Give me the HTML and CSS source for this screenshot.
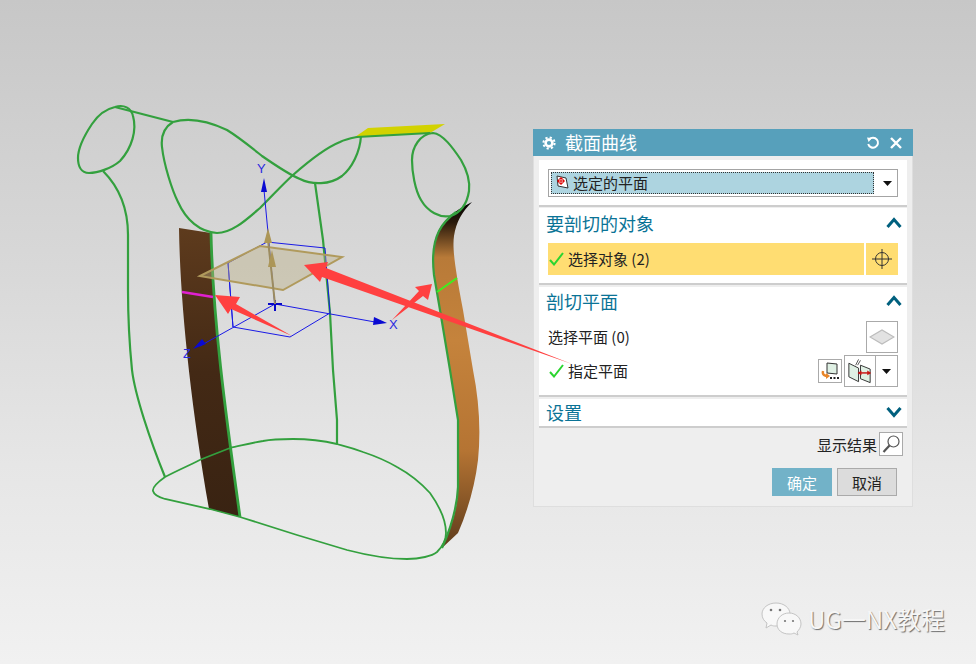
FILE: index.html
```html
<!DOCTYPE html>
<html lang="zh-CN">
<head>
  <meta charset="UTF-8">
  <title>截面曲线</title>
  <link rel="stylesheet" href="styles.css">
</head>
<body>
  <div class="viewport">
    <!-- 3D model -->
    <svg class="layer" viewBox="0 0 976 664" xmlns="http://www.w3.org/2000/svg">
      <defs>
        <linearGradient id="brown" x1="0" y1="0" x2="0" y2="1">
          <stop offset="0" stop-color="#5e3b1d"/>
          <stop offset="0.5" stop-color="#432915"/>
          <stop offset="1" stop-color="#392312"/>
        </linearGradient>
        <linearGradient id="orange" x1="0" y1="0" x2="0" y2="1">
          <stop offset="0" stop-color="#000"/>
          <stop offset="0.06" stop-color="#2a1a0c"/>
          <stop offset="0.16" stop-color="#b87a38"/>
          <stop offset="0.4" stop-color="#c5833c"/>
          <stop offset="0.72" stop-color="#b57433"/>
          <stop offset="1" stop-color="#5f3c1c"/>
        </linearGradient>
      </defs>

      <path class="strip" fill="url(#brown)" d="M179,228 L211,233 C213,320 225,410 240,517 L209,509 C190,400 180,300 179,228 Z"/>
      <path class="strip" fill="url(#orange)" d="M472,202 C462,212 456,222 454,236 C452,250 456,272 463,310 L473,370 C479,400 481,430 478,460 C475,485 468,510 458,533 L442,548 C450,530 458,510 458,487 L458,420 L450,370 L437,293 C433,270 431,250 436,237 C441,222 452,212 472,202 Z"/>
      <path fill="#d2d200" d="M355,137 L368,128 L445,124 L430,133 Z"/>

      <g class="curve">
        <path d="M115,107 C124,104 131,108 133,116 C137,130 132,148 120,161 C112,168 98,173 89,173 C81,173 78,166 78,158 C78,148 84,136 92,124 C98,115 106,109 115,107 Z"/>
        <path d="M115,107 L173,122"/>
        <path d="M103,171 C118,186 128,205 128,235 L128,290 C128,320 130,350 132,370 C135,395 150,440 165,477"/>
        <path d="M173,122 C163,128 161,138 162,147 C164,165 172,190 178,202 C186,220 200,232 217,233 C232,233 246,220 260,208 C272,196 284,183 293,175 C310,160 325,148 340,142 C346,139 352,138 357,137 L430,133"/>
        <path d="M173,122 C190,117 208,121 227,130 C240,138 252,148 262,156 C275,165 290,175 300,179 C312,185 330,185 342,176 C352,168 360,152 361,136"/>
        <path d="M433,133 C443,134 453,148 461,160 C468,172 470,182 469,191 C467,204 460,213 450,216 C440,218 428,212 421,200 C415,190 412,172 412,160 C412,147 420,134 433,133 Z"/>
        <path d="M456,212 C448,218 442,225 439,231 C433,243 432,258 434,275 L440,310 L450,370 L458,420 L458,487 C457,510 450,530 442,548"/>
        <path class="edge" d="M211,233 C213,320 225,410 240,517"/>
        <path d="M315,183 L323,240 L330,313 L333,370 L337,420 L337,444"/>
        <g class="thin">
          <path d="M165,477 C158,482 152,487 153,491 C154,495 158,497 165,499 L210,509 L240,517 L297,535 L347,550 C370,556 390,559 407,559 C420,559 432,556 437,552 C442,547 446,540 446,533 C446,520 440,507 430,493 C420,482 408,473 397,467 C385,460 372,455 363,452 C350,447 340,445 337,444 C320,440 305,439 293,439 C280,439 268,440 263,441 C250,443 240,446 230,448 L202,459 C190,465 176,471 165,477 Z"/>
        </g>
      </g>

      <path class="pink" d="M182,292 L213,297"/>
      <path class="lime" d="M437,292 L457,278"/>

      <!-- csys -->
      <g class="axes">
        <path d="M275,307 L264,190"/>
        <path d="M275,304 L375,322"/>
        <path d="M275,304 L200,346"/>
        <path d="M228,263 L267,242 L325,248 L330,313 L290,337 L233,327 Z"/>
        <path d="M228,263 L233,327"/>
        <path class="marker" d="M268,304 L282,304 M275,300 L275,311"/>
      </g>
      <path class="cone" d="M264,178 L267,192 L261,192 Z"/>
      <path class="cone" d="M387,323 L373,325 L374,317 Z"/>
      <path class="cone" d="M193,349 L202,339 L206,344 Z"/>
      <text class="axis-label" x="257" y="173">Y</text>
      <text class="axis-label" x="389" y="329">X</text>
      <text class="axis-label" x="183" y="358">Z</text>

      <path class="plane" d="M200,276 L260,246 L342,257 L283,290 Z"/>
      <path class="normal" d="M275,304 L268,240"/>
      <path class="normal-head" d="M268,228 L272,243 L264,243 Z"/>
      <path class="normal-head" d="M272,250 L276,267 L268,267 Z"/>
    </svg>

    <div class="dialog">
      <div class="titlebar">
        <svg class="gear" viewBox="0 0 14 14"><circle cx="7" cy="7" r="3.4"/><circle class="teeth" cx="7" cy="7" r="5.6"/></svg>
        <span class="title">截面曲线</span>
        <svg class="tb-btn" viewBox="0 0 14 14"><path d="M3.2,3.4 A5,5 0 1 1 2.2,8"/><path class="tip" d="M1,1.4 L6,2 L2.6,6 Z"/></svg>
        <svg class="tb-btn tb-close" viewBox="0 0 14 14"><path d="M2,2 L12,12 M12,2 L2,12"/></svg>
      </div>

      <div class="dialog-body">
        <section class="group group-top">
          <div class="combo">
            <div class="combo-value">
              <svg class="combo-icon" viewBox="0 0 13 14"><path d="M1,1 L10,3 L12,13 L2,11 Z" fill="#fff" stroke="#333"/><circle cx="5" cy="6" r="2.6" fill="none" stroke="#d00"/><path d="M5,2 L5,10 M1,6 L9,6" stroke="#d00"/></svg>
              <span>选定的平面</span>
            </div>
            <svg class="caret" viewBox="0 0 9 5"><path d="M0,0 L9,0 L4.5,5 Z"/></svg>
          </div>
        </section>

        <section class="group">
          <div class="group-head"><span>要剖切的对象</span>
            <svg class="chevron" viewBox="0 0 16 12"><path d="M1.5,10 L8,2.5 L14.5,10"/></svg>
          </div>
          <div class="pick-row">
            <div class="pick-label">
              <svg class="check" viewBox="0 0 15 14"><path d="M1,8 L5,12.5 L14,1"/></svg>
              <span>选择对象 (2)</span>
            </div>
            <div class="pick-btn">
              <svg viewBox="0 0 22 22"><circle cx="11" cy="11" r="6.5"/><path d="M11,1 L11,21 M1,11 L21,11"/></svg>
            </div>
          </div>
        </section>

        <section class="group group-plane">
          <div class="group-head"><span>剖切平面</span>
            <svg class="chevron" viewBox="0 0 16 12"><path d="M1.5,10 L8,2.5 L14.5,10"/></svg>
          </div>
          <div class="opt-row">
            <span class="opt-text">选择平面 (0)</span>
            <div class="icon-btn icon-btn-lg">
              <svg viewBox="0 0 26 18" width="26" height="18"><path d="M1,9 L13,2 L25,9 L13,16 Z" fill="#e2e2e2" stroke="#bcbcbc" stroke-width="1.2"/></svg>
            </div>
          </div>
          <div class="opt-row opt-row-last">
            <svg class="check" viewBox="0 0 15 14"><path d="M1,8 L5,12.5 L14,1"/></svg>
            <span class="opt-text">指定平面</span>
            <div class="tools">
              <div class="icon-btn icon-btn-sm">
                <svg viewBox="0 0 20 20" width="20" height="20">
                  <path d="M7,2 L17,3 L17,13 L7,12 Z" fill="#dff0e4" stroke="#333"/>
                  <path d="M3,10 C2,14 5,15 8,15" fill="none" stroke="#e8862a" stroke-width="2.4"/>
                  <path d="M6,12 L10,15 L6,18 Z" fill="#e8862a"/>
                  <path d="M10,17 L12,17 M13.5,17 L15.5,17 M17,17 L19,17" stroke="#222" stroke-width="2"/>
                </svg>
              </div>
              <div class="split-btn">
                <div class="split-main">
                  <svg viewBox="0 0 31 30" width="31" height="30">
                    <path d="M4,7 L14,12 L14,26 L4,21 Z" fill="#dff0e4" stroke="#333"/>
                    <path d="M16,9 L26,13 L26,27 L16,23 Z" fill="#dff0e4" stroke="#333"/>
                    <path d="M11,9 L14,3 M13,9 L16,4" stroke="#555"/>
                    <path d="M14,17 L26,17" stroke="#c81414" stroke-width="1.5"/>
                    <path d="M17,14.5 L13,17 L17,19.5 Z M23,14.5 L27,17 L23,19.5 Z" fill="#c81414"/>
                  </svg>
                </div>
                <div class="split-arrow"><svg class="caret" viewBox="0 0 9 5"><path d="M0,0 L9,0 L4.5,5 Z"/></svg></div>
              </div>
            </div>
          </div>
        </section>

        <section class="group group-closed">
          <div class="group-head"><span>设置</span>
            <svg class="chevron" viewBox="0 0 16 12"><path d="M1.5,2 L8,9.5 L14.5,2"/></svg>
          </div>
        </section>
      </div>

      <div class="preview">
        <span>显示结果</span>
        <div class="icon-btn icon-btn-sm">
          <svg viewBox="0 0 20 20" width="20" height="20"><circle cx="12.5" cy="7.5" r="5.5" fill="#fff" stroke="#555" stroke-width="1.2"/><path d="M8.5,11.5 L2.5,18" stroke="#555" stroke-width="2.2"/></svg>
        </div>
      </div>
      <div class="actions">
        <button class="btn btn-ok">确定</button>
        <button class="btn btn-cancel">取消</button>
      </div>
    </div>

    <!-- red callouts lie over the dialog -->
    <svg class="layer" viewBox="0 0 976 664" xmlns="http://www.w3.org/2000/svg">
      <g class="callout">
        <path d="M215,295 L240,297 L236,304 L292,336 L231,309 L228,314 Z"/>
        <path d="M304,265 L328,262 L326,268 L572,364 L322,277 L320,282 Z"/>
        <path d="M432,284 L428,300 L423,296 L392,320 L419,291 L415,287 Z"/>
      </g>
    </svg>

    <div class="watermark">
      <svg class="wechat" viewBox="0 0 42 34" width="42" height="34">
        <path class="bubble" d="M15,1 C23,1 29,6 29,12 C29,18 23,24 15,24 C13,24 12,24 10,23 L5,26 L6,21 C3,19 1,16 1,12 C1,6 7,1 15,1 Z"/>
        <path class="bubble" d="M28,11 C35,11 40,16 40,22 C40,25 38,28 36,30 L37,33 L33,31 C31,32 30,32 28,32 C21,32 16,28 16,22 C16,16 21,11 28,11 Z"/>
        <circle class="eye" cx="10" cy="8" r="1.3"/><circle class="eye" cx="19" cy="8" r="1.3"/>
        <circle class="eye" cx="24" cy="19" r="1.1"/><circle class="eye" cx="32" cy="19" r="1.1"/>
      </svg>
      <span>UG一NX教程</span>
    </div>
  </div>
</body>
</html>
```

FILE: styles.css
```css
* {
  margin: 0;
  padding: 0;
  box-sizing: border-box;
}

body {
  width: 976px;
  height: 664px;
  overflow: hidden;
  font-family: "Noto Sans CJK SC", "Noto Sans", sans-serif;
  color: #222;
}

.viewport {
  position: relative;
  width: 976px;
  height: 664px;
  background: linear-gradient(#c7c7c7 0%, #d8d8d8 40%, #e6e6e6 70%, #f1f1f1 100%);
}

.layer {
  position: absolute;
  left: 0;
  top: 0;
  width: 976px;
  height: 664px;
  pointer-events: none;
}

/* model */
.curve path {
  fill: none;
  stroke: #33a03e;
  stroke-width: 2.2;
}

.curve .edge {
  stroke-width: 2.8;
}

.curve .thin path {
  stroke-width: 1.8;
}

.pink {
  stroke: #e020d0;
  stroke-width: 2.5;
}

.lime {
  stroke: #3cf01e;
  stroke-width: 2;
}

.axes path {
  fill: none;
  stroke: #1a1ae6;
  stroke-width: 1;
}

.axes .marker {
  stroke: #0808c8;
  stroke-width: 2;
}

.cone {
  fill: #0a0ad2;
}

.axis-label {
  font-family: "Liberation Sans", sans-serif;
  font-size: 13px;
  fill: #2a2ae0;
}

.plane {
  fill: rgba(186, 174, 130, 0.42);
  stroke: #b09a5c;
  stroke-width: 2;
}

.normal {
  stroke: #9c8c60;
  stroke-width: 2;
}

.normal-head {
  fill: #ac9657;
}

.callout path {
  fill: #ff4040;
}

/* dialog */
.dialog {
  position: absolute;
  left: 533px;
  top: 129px;
  width: 380px;
  height: 378px;
  background: #eee;
  border: 1px solid #dedede;
  border-top: none;
}

.titlebar {
  display: flex;
  align-items: center;
  height: 27px;
  margin: 0 -1px;
  padding: 0 10px 0 9px;
  background: #57a0bb;
  color: #fff;
}

.gear {
  width: 14px;
  height: 14px;
}

.gear circle {
  fill: none;
  stroke: #fff;
  stroke-width: 2.6;
}

.gear .teeth {
  stroke-width: 2;
  stroke-dasharray: 2.2 2.2;
}

.title {
  flex: 1;
  margin-left: 9px;
  font-size: 18px;
  line-height: 27px;
}

.tb-btn {
  width: 14px;
  height: 14px;
  margin-right: 9px;
}

.tb-btn path {
  fill: none;
  stroke: #fff;
  stroke-width: 2;
}

.tb-btn .tip {
  fill: #fff;
  stroke: none;
}

.tb-close {
  margin-right: 0;
}

.tb-close path {
  stroke-width: 2.4;
}

.dialog-body {
  display: flex;
  flex-direction: column;
  gap: 1px;
  padding: 4px 5px 0;
}

.group {
  background: #fff;
  border-bottom: 2px solid #cdcdcd;
  padding: 0 9px 8px;
}

.group-top {
  padding-top: 9px;
}

.group-plane {
  margin-top: 1px;
}

.group-closed {
  padding-bottom: 0;
  margin-top: 1px;
}

.group-head {
  display: flex;
  align-items: center;
  justify-content: space-between;
  height: 33px;
  margin: 0 -4px 0 -2px;
  padding-bottom: 4px;
  color: #0a7396;
  font-size: 18px;
  line-height: 24px;
}

.group-plane .group-head {
  padding-bottom: 6px;
}

.group-closed .group-head {
  height: 27px;
  padding-bottom: 2px;
}

.chevron {
  width: 16px;
  height: 12px;
}

.chevron path {
  fill: none;
  stroke: #00607e;
  stroke-width: 3;
}

.combo {
  display: flex;
  align-items: center;
  height: 28px;
  padding: 2px;
  border: 1px solid #a4a4a4;
}

.combo-value {
  display: flex;
  align-items: center;
  gap: 4px;
  width: 323px;
  height: 22px;
  padding: 0 0 2px 4px;
  background: #add4e0;
  border: 1px dotted #333;
  font-size: 15px;
}

.combo-icon {
  width: 13px;
  height: 14px;
}

.caret {
  width: 9px;
  height: 5px;
  fill: #111;
}

.combo .caret {
  margin-left: 9px;
}

.pick-row {
  display: flex;
  gap: 2px;
  height: 32px;
  margin-top: 2px;
}

.pick-label {
  flex: 1;
  display: flex;
  align-items: center;
  gap: 4px;
  padding-left: 1px;
  background: #ffdd72;
  font-size: 15px;
}

.pick-label span {
  margin-top: -2px;
}

.pick-btn {
  display: flex;
  align-items: center;
  justify-content: center;
  width: 32px;
  background: #ffdd72;
}

.pick-btn svg {
  width: 22px;
  height: 22px;
  fill: none;
  stroke: #333;
  stroke-width: 1;
}

.check {
  flex: none;
  width: 15px;
  height: 14px;
}

.check path {
  fill: none;
  stroke: #2bd52f;
  stroke-width: 2;
}

.opt-row {
  display: flex;
  align-items: center;
  justify-content: space-between;
  height: 32px;
  margin-top: 1px;
  font-size: 15px;
}

.opt-text {
  margin-top: -2px;
}

.opt-row-last {
  justify-content: flex-start;
  gap: 4px;
  margin-top: 2px;
  margin-bottom: 0;
  padding-left: 1px;
}

.tools {
  display: flex;
  align-items: center;
  gap: 2px;
  margin-left: auto;
}

.icon-btn {
  display: flex;
  align-items: center;
  justify-content: center;
  background: #fff;
  border: 1px solid #aaa;
}

.icon-btn-lg {
  width: 32px;
  height: 32px;
}

.icon-btn-sm {
  width: 24px;
  height: 24px;
}

.split-btn {
  display: flex;
  height: 32px;
  border: 1px solid #aaa;
}

.split-main {
  display: flex;
  align-items: center;
  justify-content: center;
  width: 31px;
  border-right: 1px solid #aaa;
}

.split-arrow {
  display: flex;
  align-items: center;
  justify-content: center;
  width: 21px;
}

.preview {
  display: flex;
  align-items: center;
  justify-content: flex-end;
  gap: 2px;
  margin-top: 4px;
  padding-right: 9px;
  font-size: 15px;
}

.actions {
  display: flex;
  justify-content: flex-end;
  gap: 5px;
  margin-top: 12px;
  padding-right: 15px;
}

.btn {
  width: 60px;
  height: 28px;
  font-family: inherit;
  font-size: 15px;
}

.btn-ok {
  background: #72b2c8;
  border: none;
  color: #fff;
}

.btn-cancel {
  background: #dcdcdc;
  border: 1px solid #aaa;
  color: #222;
}

/* watermark */
.watermark {
  position: absolute;
  left: 761px;
  top: 602px;
  display: flex;
  align-items: center;
  gap: 5px;
  font-size: 24px;
  line-height: 34px;
  color: #f6f6f6;
  text-shadow: 1px 1px 1px #6e6e6e;
  white-space: nowrap;
}

.bubble {
  fill: #f8f8f8;
  stroke: #c4c4c4;
}

.eye {
  fill: #777;
}
```
